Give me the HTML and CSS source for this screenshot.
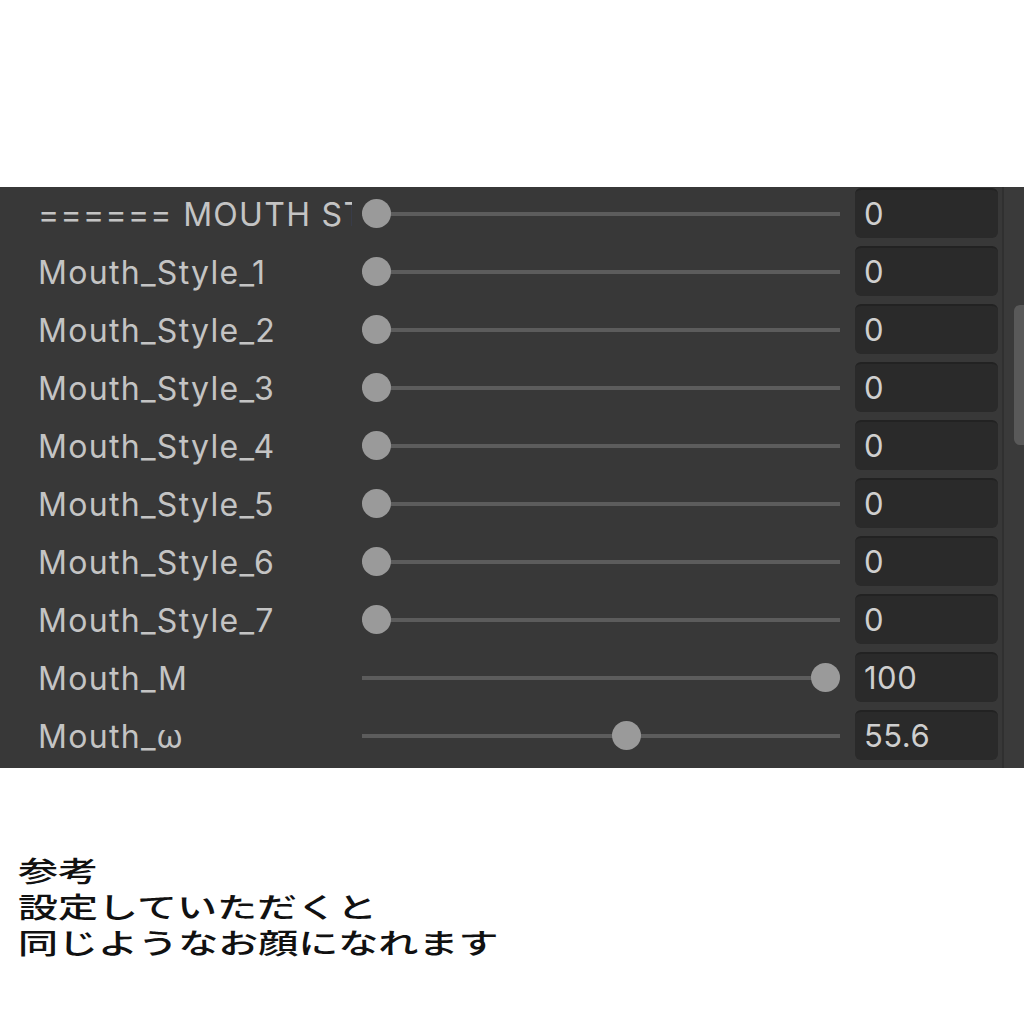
FILE: index.html
```html
<!DOCTYPE html>
<html lang="ja">
<head>
<meta charset="utf-8">
<title>Mouth</title>
<link rel="stylesheet" href="styles.css">
</head>
<body>

<div class="top-space"></div>

<div id="panel">
  <div class="rows">
    <div class="row">
      <div class="label">====== MOUTH STYLE ======</div>
      <div class="slider"><div class="track"></div><div class="rail"><div class="thumb" style="left: 0%"></div></div></div>
      <div class="field">0</div>
    </div>
    <div class="row">
      <div class="label">Mouth_Style_1</div>
      <div class="slider"><div class="track"></div><div class="rail"><div class="thumb" style="left: 0%"></div></div></div>
      <div class="field">0</div>
    </div>
    <div class="row">
      <div class="label">Mouth_Style_2</div>
      <div class="slider"><div class="track"></div><div class="rail"><div class="thumb" style="left: 0%"></div></div></div>
      <div class="field">0</div>
    </div>
    <div class="row">
      <div class="label">Mouth_Style_3</div>
      <div class="slider"><div class="track"></div><div class="rail"><div class="thumb" style="left: 0%"></div></div></div>
      <div class="field">0</div>
    </div>
    <div class="row">
      <div class="label">Mouth_Style_4</div>
      <div class="slider"><div class="track"></div><div class="rail"><div class="thumb" style="left: 0%"></div></div></div>
      <div class="field">0</div>
    </div>
    <div class="row">
      <div class="label">Mouth_Style_5</div>
      <div class="slider"><div class="track"></div><div class="rail"><div class="thumb" style="left: 0%"></div></div></div>
      <div class="field">0</div>
    </div>
    <div class="row">
      <div class="label">Mouth_Style_6</div>
      <div class="slider"><div class="track"></div><div class="rail"><div class="thumb" style="left: 0%"></div></div></div>
      <div class="field">0</div>
    </div>
    <div class="row">
      <div class="label">Mouth_Style_7</div>
      <div class="slider"><div class="track"></div><div class="rail"><div class="thumb" style="left: 0%"></div></div></div>
      <div class="field">0</div>
    </div>
    <div class="row">
      <div class="label">Mouth_M</div>
      <div class="slider"><div class="track"></div><div class="rail"><div class="thumb" style="left: 100%"></div></div></div>
      <div class="field">100</div>
    </div>
    <div class="row">
      <div class="label">Mouth_ω</div>
      <div class="slider"><div class="track"></div><div class="rail"><div class="thumb" style="left: 55.6%"></div></div></div>
      <div class="field">55.6</div>
    </div>
  </div>
  <div class="scrollbar"><div class="scroll-thumb"></div></div>
</div>

<div class="note">
  <div class="note-line">参考</div>
  <div class="note-line">設定していただくと</div>
  <div class="note-line">同じようなお顔になれます</div>
</div>

</body>
</html>
```

FILE: styles.css
```css
body {
  margin: 0;
  padding: 0;
  background: #ffffff;
  width: 1024px;
  height: 1024px;
  overflow: hidden;
}

.top-space {
  height: 187px;
}

#panel {
  height: 581px;
  background-color: #383838;
  overflow: hidden;
  display: flex;
}

.rows {
  margin-top: -3px;
  flex: 1;
}

.row {
  height: 58px;
  display: flex;
  align-items: center;
  font-family: Inter, "Noto Sans", sans-serif;
  color: #c4c4c4;
}

.label {
  width: 314px;
  margin-left: 38px;
  font-size: 32px;
  letter-spacing: 1.3px;
  white-space: nowrap;
  overflow: hidden;
  padding-top: 3px;
}

.slider {
  position: relative;
  width: 478px;
  height: 29px;
  margin-left: 10px;
}

.track {
  position: absolute;
  left: 0;
  right: 0;
  top: 13px;
  height: 4px;
  background-color: #5c5c5c;
}

/* the thumb's left edge moves over the track length minus its own width */
.rail {
  position: absolute;
  top: 0;
  left: 0;
  right: 29px;
  height: 29px;
}

.thumb {
  position: absolute;
  top: 0;
  width: 29px;
  height: 29px;
  border-radius: 50%;
  background-color: #9a9a9a;
}

.field {
  box-sizing: border-box;
  width: 143px;
  height: 50px;
  margin-left: 15px;
  padding-left: 9px;
  border-radius: 6px;
  background-color: #2a2a2a;
  border-top: 2px solid #222222;
  font-size: 31px;
  letter-spacing: 0.5px;
  line-height: 48px;
  color: #cfcfcf;
}

.scrollbar {
  width: 20px;
  border-left: 2px solid #303030;
  background-color: #3a3a3a;
  position: relative;
}

.scroll-thumb {
  position: absolute;
  top: 118px;
  left: 10px;
  width: 12px;
  height: 140px;
  border-radius: 6px 0 0 6px;
  background-color: #595959;
}

.note {
  padding-top: 87px;
  padding-left: 18px;
  font-family: "Liberation Serif", "Noto Sans CJK JP", serif;
  font-weight: 500;
  color: #111111;
}

.note-line {
  font-size: 28px;
  line-height: 36px;
  white-space: nowrap;
  transform: scaleX(1.43);
  transform-origin: left center;
}
```
